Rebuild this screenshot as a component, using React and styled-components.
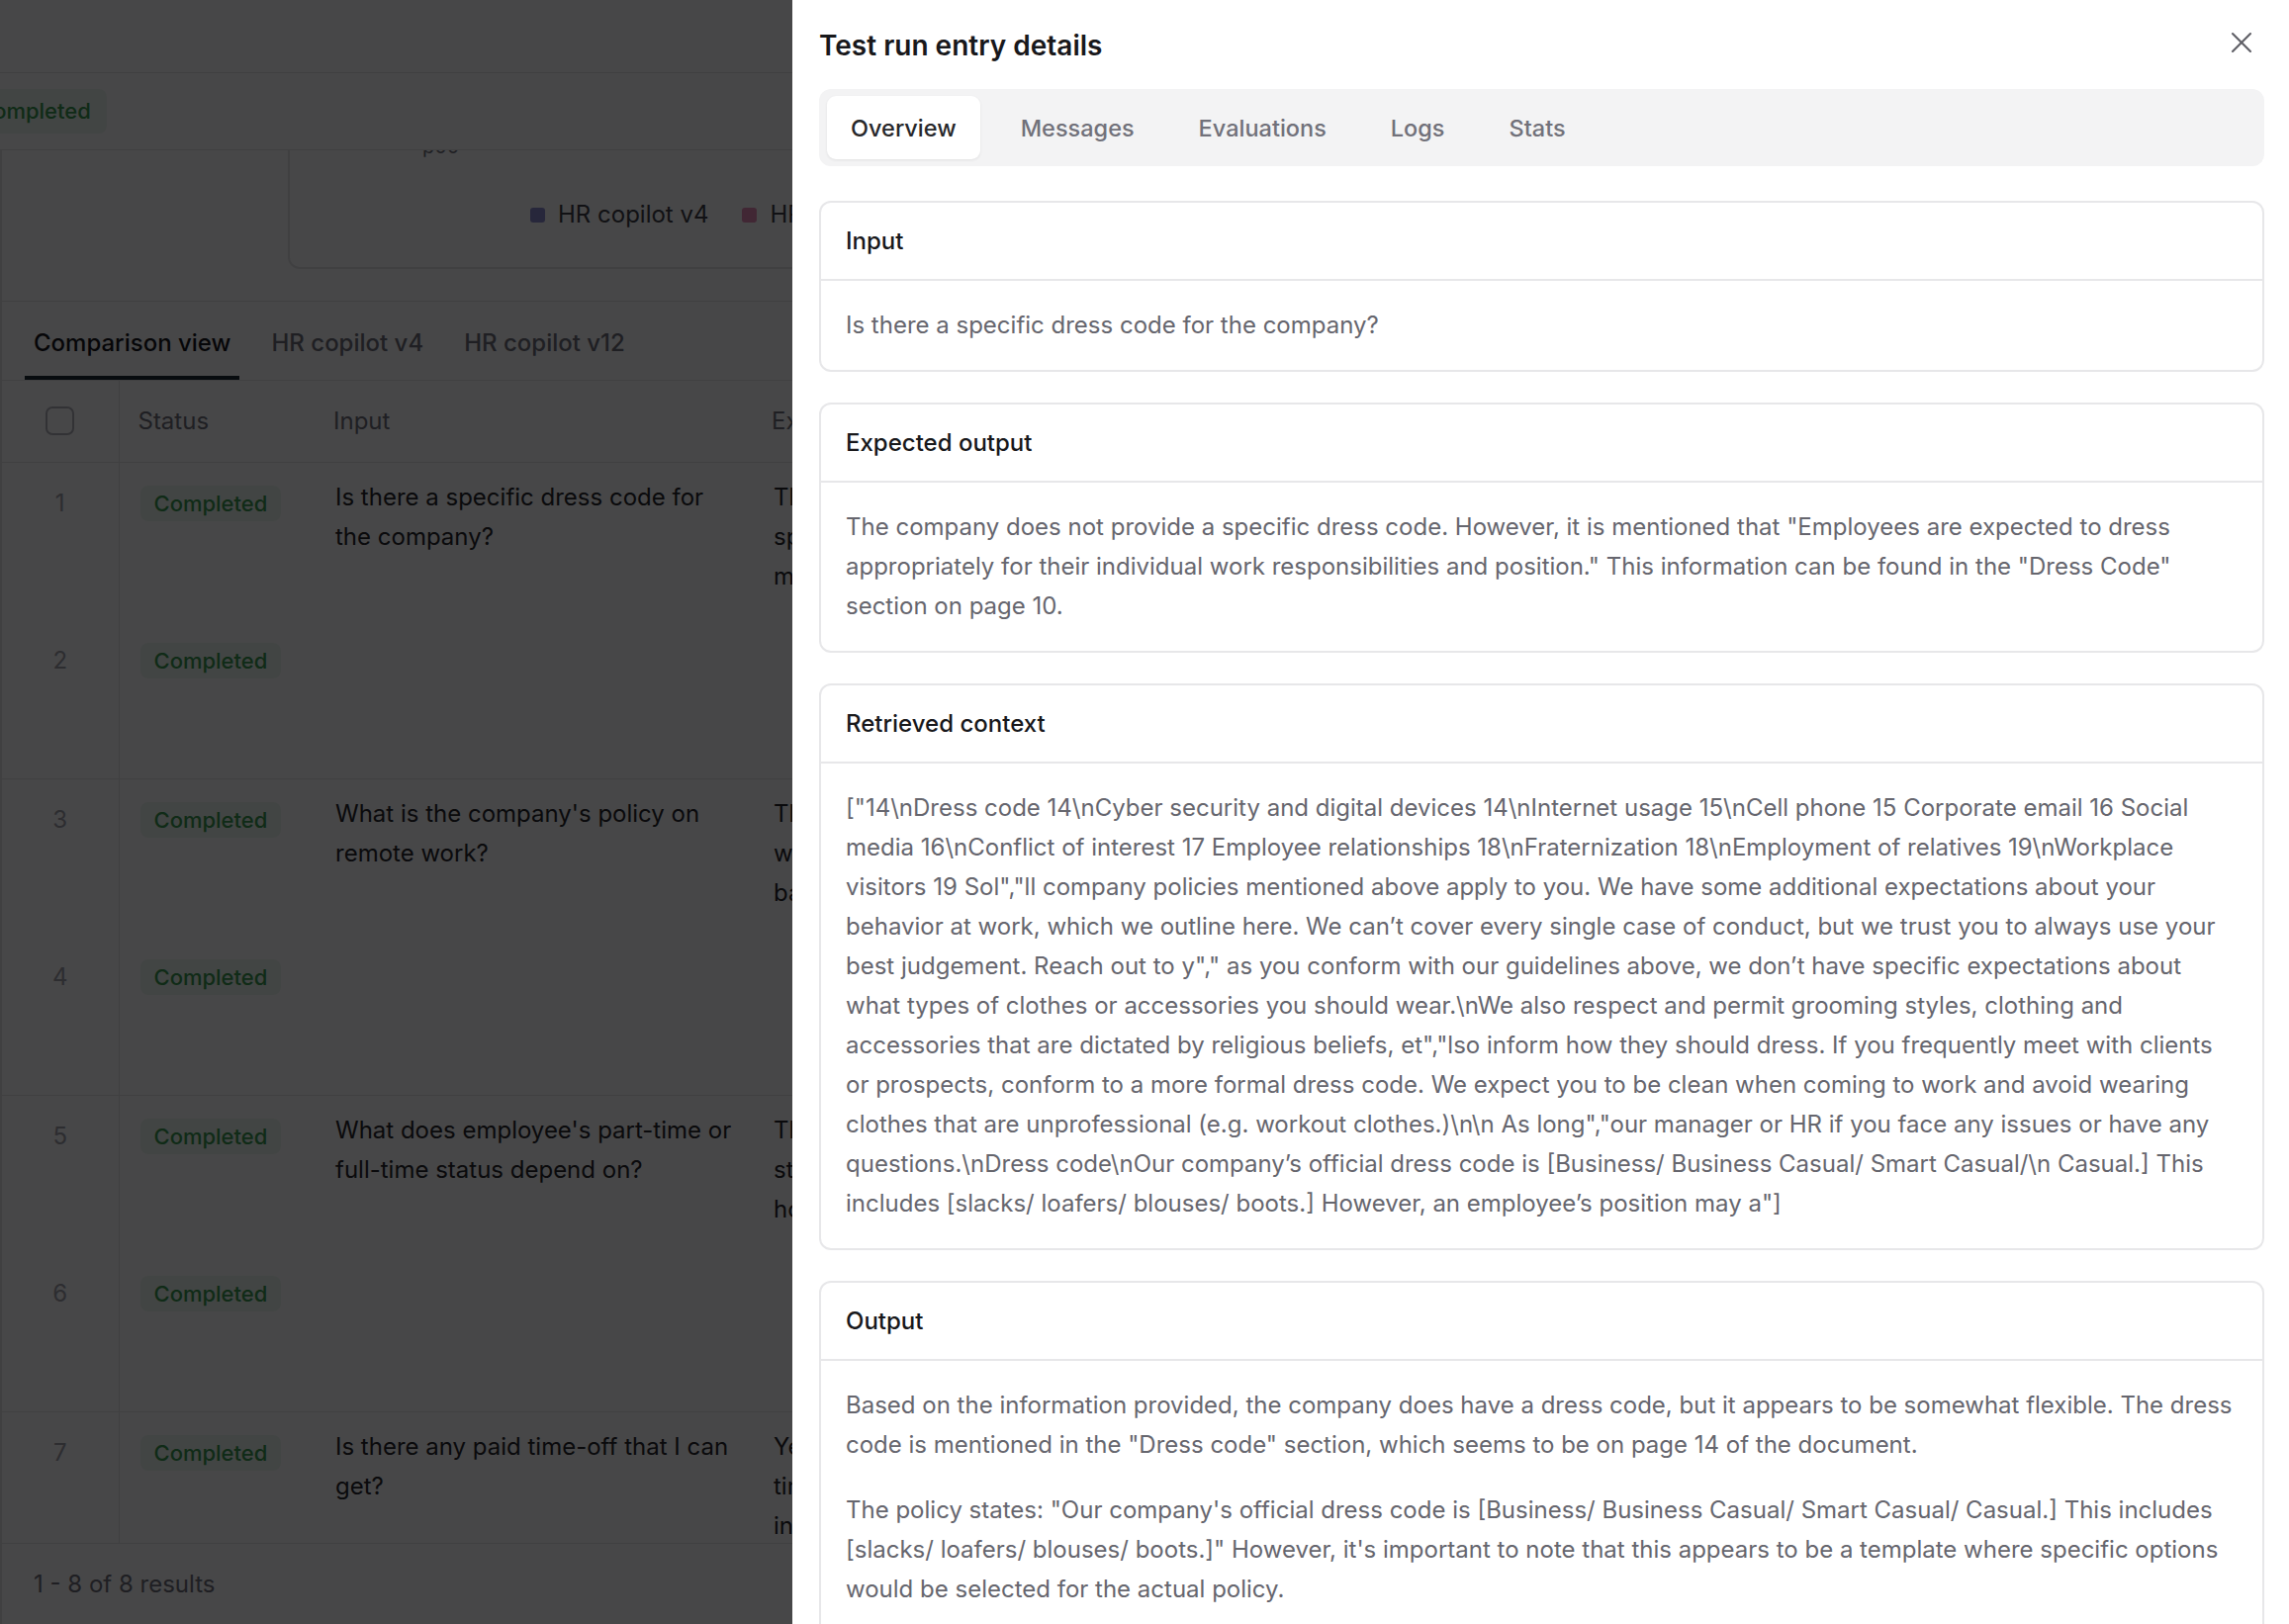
import React from "react";
import styled, { createGlobalStyle } from "styled-components";
import { X } from "lucide-react";

const GlobalStyle = createGlobalStyle`
  html, body { margin: 0; padding: 0; }
  body {
    font-family: Inter, "Noto Sans", sans-serif;
    background: #ffffff;
    overflow: hidden;
  }
  * { box-sizing: border-box; }
`;

const rows = [
  {
    id: 1,
    input: "Is there a specific dress code for the company?",
    expected: ["The company does not provide a", "specific dress code. However, it is", "mentioned that \"Employees are"],
  },
  {
    id: 3,
    input: "What is the company's policy on remote work?",
    expected: ["The company allows employees to", "work remotely on a case-by-case", "basis with manager approval."],
  },
  {
    id: 5,
    input: "What does employee's part-time or full-time status depend on?",
    expected: ["The employee's part-time or full-time", "status depends on the number of", "hours worked per week."],
  },
  {
    id: 7,
    input: "Is there any paid time-off that I can get?",
    expected: ["Yes, employees are entitled to paid", "time-off, which includes vacation days,", "in addition to public holidays."],
  },
];

const retrieved =
  '["14\\nDress code 14\\nCyber security and digital devices 14\\nInternet usage 15\\nCell phone 15 Corporate email 16 Social media 16\\nConflict of interest 17 Employee relationships 18\\nFraternization 18\\nEmployment of relatives 19\\nWorkplace visitors 19 Sol","ll company policies mentioned above apply to you. We have some additional expectations about your behavior at work, which we outline here. We can\u2019t cover every single case of conduct, but we trust you to always use your best judgement. Reach out to y"," as you conform with our guidelines above, we don\u2019t have specific expectations about what types of clothes or accessories you should wear.\\nWe also respect and permit grooming styles, clothing and accessories that are dictated by religious beliefs, et","lso inform how they should dress. If you frequently meet with clients or prospects, conform to a more formal dress code. We expect you to be clean when coming to work and avoid wearing clothes that are unprofessional (e.g. workout clothes.)\\n\\n As long","our manager or HR if you face any issues or have any questions.\\nDress code\\nOur company\u2019s official dress code is [Business/ Business Casual/ Smart Casual/\\n Casual.] This includes [slacks/ loafers/ blouses/ boots.] However, an employee\u2019s position may a"]';

const outputParas = [
  'Based on the information provided, the company does have a dress code, but it appears to be somewhat flexible. The dress code is mentioned in the "Dress code" section, which seems to be on page 14 of the document.',
  'The policy states: "Our company\'s official dress code is [Business/ Business Casual/ Smart Casual/ Casual.] This includes [slacks/ loafers/ blouses/ boots.]" However, it\'s important to note that this appears to be a template where specific options would be selected for the actual policy.',
  "If you need more specific guidance, it would be best to reach out to your manager or HR department.",
];

/* ---------- page behind the drawer ---------- */

const Page = styled.div`
  width: 100vw;
  height: 100vh;
  overflow: hidden;
  background: #ffffff;
  color: #27272a;
  font-size: 24px;
`;

const TopBar = styled.div`
  height: 74px;
  border-bottom: 1px solid #e4e4e7;
`;

const StatusStrip = styled.div`
  height: 78px;
  display: flex;
  align-items: center;
  border-bottom: 1px solid #e4e4e7;
`;

const Badge = styled.span`
  display: inline-block;
  padding: 0 ${(p) => (p.$large ? 16 : 14)}px;
  height: ${(p) => (p.$large ? 45 : 36)}px;
  line-height: ${(p) => (p.$large ? 45 : 36)}px;
  margin-left: ${(p) => (p.$large ? -39 : 0)}px;
  border-radius: 8px;
  background: #eef8f0;
  color: #3a9a4f;
  font-weight: 500;
  font-size: 22px;
  white-space: nowrap;
`;

const Panel = styled.div`
  border-left: 2px solid #e4e4e7;
`;

const ChartViewport = styled.div`
  height: 153px;
  overflow: hidden;
  display: flex;
  flex-direction: column;
  justify-content: flex-end;
  border-bottom: 1px solid #e4e4e7;
`;

const ChartCard = styled.div`
  flex-shrink: 0;
  margin: 0 0 32px 289px;
  padding: 40px 0 38px;
  border: 2px solid #e4e4e7;
  border-radius: 12px;
`;

const AxisLabel = styled.div`
  margin-left: 134px;
  font-size: 20px;
  line-height: 24px;
  color: #71717a;
`;

const Legend = styled.div`
  display: flex;
  gap: 34px;
  margin-top: 42px;
  padding-left: 243px;
  white-space: nowrap;
`;

const LegendItem = styled.div`
  display: flex;
  align-items: center;
  gap: 13px;
  line-height: 30px;
  color: #3f3f46;
`;

const Swatch = styled.span`
  width: 15px;
  height: 15px;
  border-radius: 3px;
  background: ${(p) => p.$color};
`;

const ViewTabs = styled.div`
  height: 80px;
  display: flex;
  align-items: flex-end;
  gap: 23px;
  padding-left: 23px;
  border-bottom: 1px solid #e4e4e7;
`;

const ViewTab = styled.div`
  height: 80px;
  padding: 9px 9px 0;
  display: flex;
  align-items: center;
  font-weight: 500;
  white-space: nowrap;
  color: ${(p) => (p.$active ? "#18181b" : "#71717a")};
  border-bottom: 4px solid ${(p) => (p.$active ? "#1f2d33" : "transparent")};
`;

const TableViewport = styled.div`
  height: 1176px;
  overflow: hidden;
  border-bottom: 1px solid #e4e4e7;
`;

const Table = styled.table`
  border-collapse: collapse;
  table-layout: fixed;
  width: 1500px;
  font-size: 24px;
`;

const Th = styled.th`
  height: 82px;
  padding: 0 0 0 19px;
  text-align: left;
  font-weight: 400;
  color: #71717a;
  border-bottom: 1px solid #e4e4e7;
`;

const NumTh = styled(Th)`
  padding: 0;
  text-align: center;
  border-right: 1px solid #e4e4e7;
`;

const Checkbox = styled.span`
  display: inline-block;
  width: 29px;
  height: 29px;
  margin-top: 6px;
  border: 2px solid #b4b4bb;
  border-radius: 7px;
  background: #ffffff;
`;

const Group = styled.tbody`
  border-bottom: 1px solid #e4e4e7;
`;

const Tr = styled.tr`
  height: 160px;
`;

const NumCell = styled.td`
  vertical-align: top;
  padding-top: 23px;
  line-height: 36px;
  text-align: center;
  color: #a1a1aa;
  border-right: 1px solid #e4e4e7;
`;

const StatusCell = styled.td`
  vertical-align: top;
  padding: 23px 0 0 21px;
`;

const TextCell = styled.td`
  vertical-align: top;
  padding: 15px 21px;
  line-height: 40px;
  color: #27272a;
`;

const ClipLine = styled.div`
  white-space: nowrap;
  overflow: hidden;
`;

const Footer = styled.div`
  height: 81px;
  display: flex;
  align-items: center;
  padding-left: 32px;
  color: #71717a;
`;

/* ---------- overlay + drawer ---------- */

const Overlay = styled.div`
  position: fixed;
  inset: 0;
  background: rgba(0, 0, 2, 0.72);
`;

const Drawer = styled.aside`
  position: fixed;
  top: 0;
  right: 0;
  bottom: 0;
  width: 1513px;
  background: #ffffff;
  padding: 0 25px 0 27px;
  overflow: hidden;
  display: flex;
  flex-direction: column;
  gap: 31px;
`;

const DrawerHeader = styled.div`
  display: flex;
  align-items: center;
  justify-content: space-between;
  padding-top: 23px;
  margin-bottom: -10px;
`;

const Title = styled.h2`
  margin: 0;
  font-size: 28px;
  line-height: 46px;
  font-weight: 600;
  color: #18181b;
`;

const CloseButton = styled.button`
  border: none;
  background: none;
  padding: 0;
  margin: -6px 5px 0 0;
  display: flex;
  color: #5f5f66;
  cursor: pointer;
`;

const TabBar = styled.div`
  display: flex;
  gap: 17px;
  height: 78px;
  padding: 7px 8px;
  background: #f3f3f4;
  border-radius: 12px;
  flex-shrink: 0;
  margin-bottom: 4px;
`;

const Tab = styled.div`
  display: flex;
  align-items: center;
  padding: 0 24px;
  border-radius: 9px;
  font-size: 23.5px;
  font-weight: 500;
  color: ${(p) => (p.$active ? "#27272a" : "#71717a")};
  background: ${(p) => (p.$active ? "#ffffff" : "transparent")};
  box-shadow: ${(p) => (p.$active ? "0 1px 3px rgba(0,0,0,0.08)" : "none")};
`;

const Card = styled.section`
  flex-shrink: 0;
  border: 2px solid #e7e7e9;
  border-radius: 12px;
  background: #ffffff;
`;

const CardHeader = styled.div`
  height: 79px;
  display: flex;
  align-items: center;
  padding: 0 25px;
  font-size: 24px;
  font-weight: 500;
  color: #18181b;
  border-bottom: 2px solid #e7e7e9;
`;

const CardBody = styled.div`
  padding: 25px 25px 25px;
  font-size: 24px;
  line-height: 40px;
  color: #66666e;

  p {
    margin: 0 0 26px;
  }
  p:last-child {
    margin-bottom: 0;
  }
`;

const tabs = ["Overview", "Messages", "Evaluations", "Logs", "Stats"];

export default function App() {
  return (
    <>
      <GlobalStyle />
      <Page>
        <TopBar />
        <StatusStrip>
          <Badge $large>Completed</Badge>
        </StatusStrip>
        <Panel>
          <ChartViewport>
            <ChartCard>
              <AxisLabel>p00</AxisLabel>
              <Legend>
                <LegendItem>
                  <Swatch $color="#8c8ccf" />
                  HR copilot v4
                </LegendItem>
                <LegendItem>
                  <Swatch $color="#e88cb8" />
                  HR copilot v12
                </LegendItem>
              </Legend>
            </ChartCard>
          </ChartViewport>
          <ViewTabs>
            <ViewTab $active>Comparison view</ViewTab>
            <ViewTab>HR copilot v4</ViewTab>
            <ViewTab>HR copilot v12</ViewTab>
          </ViewTabs>
          <TableViewport>
            <Table>
              <colgroup>
                <col style={{ width: 118 }} />
                <col style={{ width: 198 }} />
                <col style={{ width: 443 }} />
                <col style={{ width: 741 }} />
              </colgroup>
              <thead>
                <tr>
                  <NumTh>
                    <Checkbox />
                  </NumTh>
                  <Th>Status</Th>
                  <Th>Input</Th>
                  <Th>Expected output</Th>
                </tr>
              </thead>
              {rows.map((r) => (
                <Group key={r.id}>
                  <Tr>
                    <NumCell>{r.id}</NumCell>
                    <StatusCell>
                      <Badge>Completed</Badge>
                    </StatusCell>
                    <TextCell rowSpan={2}>{r.input}</TextCell>
                    <TextCell rowSpan={2}>
                      {r.expected.map((l) => (
                        <ClipLine key={l}>{l}</ClipLine>
                      ))}
                    </TextCell>
                  </Tr>
                  <Tr>
                    <NumCell>{r.id + 1}</NumCell>
                    <StatusCell>
                      <Badge>Completed</Badge>
                    </StatusCell>
                  </Tr>
                </Group>
              ))}
            </Table>
          </TableViewport>
          <Footer>1 - 8 of 8 results</Footer>
        </Panel>
      </Page>

      <Overlay />
      <Drawer>
        <DrawerHeader>
          <Title>Test run entry details</Title>
          <CloseButton aria-label="Close">
            <X size={36} strokeWidth={1.4} />
          </CloseButton>
        </DrawerHeader>
        <TabBar>
          {tabs.map((t, i) => (
            <Tab key={t} $active={i === 0}>
              {t}
            </Tab>
          ))}
        </TabBar>
        <Card>
          <CardHeader>Input</CardHeader>
          <CardBody>Is there a specific dress code for the company?</CardBody>
        </Card>
        <Card>
          <CardHeader>Expected output</CardHeader>
          <CardBody>
            The company does not provide a specific dress code. However, it is
            mentioned that "Employees are expected to dress appropriately for
            their individual work responsibilities and position." This
            information can be found in the "Dress Code" section on page 10.
          </CardBody>
        </Card>
        <Card>
          <CardHeader>Retrieved context</CardHeader>
          <CardBody>{retrieved}</CardBody>
        </Card>
        <Card>
          <CardHeader>Output</CardHeader>
          <CardBody>
            {outputParas.map((p) => (
              <p key={p}>{p}</p>
            ))}
          </CardBody>
        </Card>
      </Drawer>
    </>
  );
}
